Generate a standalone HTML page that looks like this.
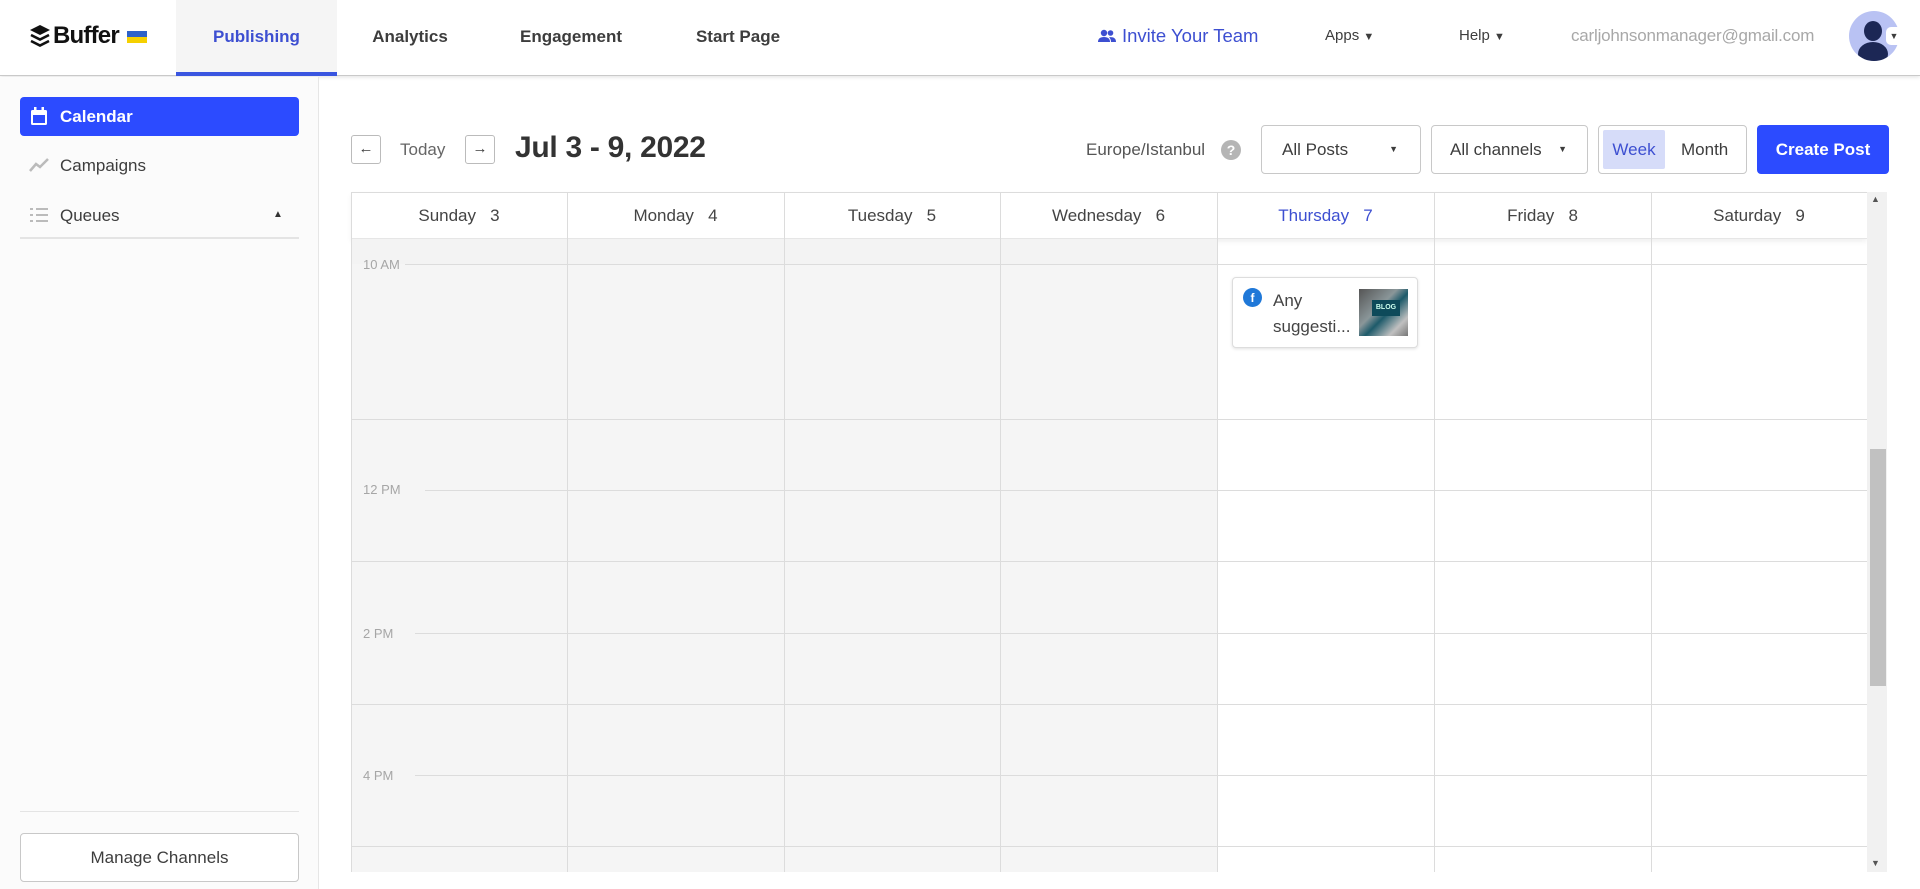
<!DOCTYPE html>
<html><head><meta charset="utf-8"><style>
*{box-sizing:border-box;margin:0;padding:0}
body{width:1920px;height:889px;overflow:hidden;background:#fff;font-family:"Liberation Sans",sans-serif;position:relative;color:#3d3d3d}
.a{position:absolute}
.hdr{left:0;top:0;width:1920px;height:76px;background:#fff;border-bottom:1px solid #c9c9c9;box-shadow:0 1px 4px rgba(0,0,0,.12)}
.tab{top:0;height:76px;line-height:74px;font-size:17px;font-weight:bold;color:#3d3d3d;text-align:center}
.side{left:0;top:77px;width:319px;height:812px;background:#fbfbfb;border-right:1px solid #e6e6e6}
.tb{top:125px;height:49px;border:1px solid #c8c8c8;border-radius:4px;background:#fff;font-size:17px;line-height:47px;color:#3d3d3d}
.vl{top:192px;width:1px;height:680px;background:#dcdcdc}
.hl{left:351px;width:1516px;height:1px;background:#dcdcdc}
.hd{top:192px;height:47px;line-height:47px;text-align:center;font-size:17px;color:#444}
.tl{left:363px;font-size:13px;color:#a6a6a6}
</style></head><body>
<div class="a hdr"></div>
<svg class="a" style="left:29px;top:24px" width="22" height="24" viewBox="0 0 22 24"><path d="M11 1 L21 6 L11 11 L1 6Z" fill="#111"/><path d="M2 11 L11 15.5 L20 11" stroke="#111" stroke-width="2.6" fill="none"/><path d="M2 17 L11 21.5 L20 17" stroke="#111" stroke-width="2.6" fill="none"/></svg>
<div class="a" style="left:53px;top:22px;font-size:24px;font-weight:bold;color:#111;letter-spacing:-0.8px">Buffer</div>
<div class="a" style="left:127px;top:31px;width:20px;height:6px;background:#2e62c9"></div>
<div class="a" style="left:127px;top:37px;width:20px;height:6px;background:#f5d000"></div>
<div class="a tab" style="left:176px;width:161px;background:#f5f5f5;color:#3d4fd1;border-bottom:4px solid #3a56e0;height:76px">Publishing</div>
<div class="a tab" style="left:360px;width:100px">Analytics</div>
<div class="a tab" style="left:510px;width:122px">Engagement</div>
<div class="a tab" style="left:685px;width:106px">Start Page</div>
<svg class="a" style="left:1098px;top:29px" width="18" height="14" viewBox="0 0 18 14"><circle cx="6" cy="4" r="3.2" fill="#3d4fd1"/><circle cx="12.5" cy="4" r="2.8" fill="#3d4fd1"/><path d="M0 13 Q0 8 6 8 Q12 8 12 13Z" fill="#3d4fd1"/><path d="M11 8.2 Q18 7.5 18 13 H13 Q13 10 11 8.2Z" fill="#3d4fd1"/></svg>
<div class="a" style="left:1122px;top:25px;font-size:18.5px;color:#3d4fd1">Invite Your Team</div>
<div class="a" style="left:1325px;top:27px;font-size:15px;color:#3d3d3d">Apps <span style="font-size:11px">▼</span></div>
<div class="a" style="left:1459px;top:27px;font-size:15px;color:#3d3d3d">Help <span style="font-size:11px">▼</span></div>
<div class="a" style="left:1571px;top:26px;font-size:17px;color:#a8a8a8;letter-spacing:-0.2px">carljohnsonmanager@gmail.com</div>
<div class="a" style="left:1849px;top:11px;width:50px;height:50px;border-radius:50%;background:#b9c2f3;overflow:hidden">
<div class="a" style="left:15px;top:10px;width:18px;height:20px;border-radius:50%;background:#1c2755"></div>
<div class="a" style="left:9px;top:31px;width:30px;height:24px;border-radius:50%;background:#1c2755"></div></div>
<div class="a" style="left:1886px;top:27px;width:16px;height:18px;border-radius:5px;background:#fff;font-size:9px;text-align:center;line-height:18px">▼</div>
<div class="a side"></div>
<div class="a" style="left:20px;top:97px;width:279px;height:39px;background:#2c4bff;border-radius:4px"></div>
<svg class="a" style="left:30px;top:107px" width="18" height="19" viewBox="0 0 18 19"><rect x="1" y="3" width="16" height="15" rx="1.5" fill="#fff"/><rect x="4" y="0" width="2.5" height="4" fill="#fff"/><rect x="11.5" y="0" width="2.5" height="4" fill="#fff"/><rect x="3" y="8" width="12" height="8" fill="#2c4bff"/></svg>
<div class="a" style="left:60px;top:107px;font-size:17px;font-weight:bold;color:#fff">Calendar</div>
<svg class="a" style="left:29px;top:158px" width="20" height="14" viewBox="0 0 20 14"><path d="M1 13 L7 6 L11 9 L19 1" stroke="#bbb" stroke-width="2.5" fill="none"/></svg>
<div class="a" style="left:60px;top:156px;font-size:17px;color:#3d3d3d">Campaigns</div>
<svg class="a" style="left:30px;top:207px" width="18" height="16" viewBox="0 0 18 16"><g fill="#bbb"><rect x="0" y="1" width="3" height="2"/><rect x="0" y="7" width="3" height="2"/><rect x="0" y="13" width="3" height="2"/><rect x="6" y="1" width="12" height="2"/><rect x="6" y="7" width="12" height="2"/><rect x="6" y="13" width="12" height="2"/></g></svg>
<div class="a" style="left:60px;top:206px;font-size:17px;color:#3d3d3d">Queues</div>
<div class="a" style="left:273px;top:209px;font-size:10px;color:#333">▲</div>
<div class="a" style="left:20px;top:237px;width:279px;height:2px;background:#e4e4e4"></div>
<div class="a" style="left:20px;top:811px;width:279px;height:1px;background:#e4e4e4"></div>
<div class="a" style="left:20px;top:833px;width:279px;height:49px;border:1px solid #c8c8c8;border-radius:4px;background:#fff;text-align:center;line-height:47px;font-size:17px;color:#3d3d3d">Manage Channels</div>
<div class="a" style="left:351px;top:135px;width:30px;height:29px;border:1px solid #bbb;border-radius:3px;text-align:center;line-height:26px;font-size:15px;font-weight:bold">←</div>
<div class="a" style="left:400px;top:140px;font-size:17px;color:#666">Today</div>
<div class="a" style="left:465px;top:135px;width:30px;height:29px;border:1px solid #bbb;border-radius:3px;text-align:center;line-height:26px;font-size:15px;font-weight:bold">→</div>
<div class="a" style="left:515px;top:131px;font-size:30px;font-weight:bold;color:#333;letter-spacing:-0.3px">Jul 3 - 9, 2022</div>
<div class="a" style="left:1086px;top:140px;font-size:17px;color:#555">Europe/Istanbul</div>
<div class="a" style="left:1221px;top:140px;width:20px;height:20px;border-radius:50%;background:#b5b5b5;color:#fff;font-size:14px;font-weight:bold;text-align:center;line-height:20px">?</div>
<div class="a tb" style="left:1261px;width:160px;padding-left:20px">All Posts<span style="position:absolute;right:22px;font-size:9px">▼</span></div>
<div class="a tb" style="left:1431px;width:157px;padding-left:18px">All channels<span style="position:absolute;right:20px;font-size:9px">▼</span></div>
<div class="a tb" style="left:1598px;width:149px"></div>
<div class="a" style="left:1603px;top:130px;width:62px;height:39px;background:#d6dcf9;border-radius:2px;text-align:center;line-height:39px;font-size:17px;color:#3d4fd1">Week</div>
<div class="a" style="left:1681px;top:130px;line-height:39px;font-size:17px;color:#3d3d3d">Month</div>
<div class="a" style="left:1757px;top:125px;width:132px;height:49px;background:#2c4bff;border-radius:4px;color:#fff;font-size:17px;font-weight:bold;text-align:center;line-height:49px">Create Post</div>
<div class="a" style="left:351px;top:192px;width:866px;height:680px;background:#f5f5f5"></div>
<div class="a" style="left:351px;top:192px;width:1516px;height:47px;background:#fff;border-top:1px solid #dcdcdc;border-bottom:1px solid #e6e6e6;box-shadow:0 3px 5px rgba(0,0,0,.06)"></div>
<div class="a" style="left:351px;top:239px;width:866px;height:25px;background:#f3f3f3"></div>
<div class="a vl" style="left:351px"></div><div class="a vl" style="left:567px"></div><div class="a vl" style="left:784px"></div><div class="a vl" style="left:1000px"></div><div class="a vl" style="left:1217px"></div><div class="a vl" style="left:1434px"></div><div class="a vl" style="left:1651px"></div><div class="a vl" style="left:1867px"></div>
<div class="a hd" style="left:351px;width:216px">Sunday&nbsp;&nbsp; 3</div>
<div class="a hd" style="left:567px;width:217px">Monday&nbsp;&nbsp; 4</div>
<div class="a hd" style="left:784px;width:216px">Tuesday&nbsp;&nbsp; 5</div>
<div class="a hd" style="left:1000px;width:217px">Wednesday&nbsp;&nbsp; 6</div>
<div class="a hd" style="left:1217px;width:217px;color:#3d4fd1">Thursday&nbsp;&nbsp; 7</div>
<div class="a hd" style="left:1434px;width:217px">Friday&nbsp;&nbsp; 8</div>
<div class="a hd" style="left:1651px;width:216px">Saturday&nbsp;&nbsp; 9</div>
<div class="a hl" style="top:264px;left:405px;width:1462px"></div>
<div class="a hl" style="top:419px"></div>
<div class="a hl" style="top:490px;left:425px;width:1442px"></div>
<div class="a hl" style="top:561px"></div>
<div class="a hl" style="top:633px;left:415px;width:1452px"></div>
<div class="a hl" style="top:704px"></div>
<div class="a hl" style="top:775px;left:415px;width:1452px"></div>
<div class="a hl" style="top:846px"></div>
<div class="a tl" style="top:257px">10 AM</div>
<div class="a tl" style="top:482px">12 PM</div>
<div class="a tl" style="top:626px">2 PM</div>
<div class="a tl" style="top:768px">4 PM</div>
<div class="a" style="left:1232px;top:277px;width:186px;height:71px;background:#fff;border:1px solid #ddd;border-radius:4px;box-shadow:0 1px 3px rgba(0,0,0,.12)"></div>
<div class="a" style="left:1243px;top:288px;width:19px;height:19px;border-radius:50%;background:#1f78d8;color:#fff;font-size:12px;font-weight:bold;text-align:center;line-height:20px">f</div>
<div class="a" style="left:1273px;top:288px;font-size:17px;line-height:26px;color:#444">Any<br>suggesti...</div>
<div class="a" style="left:1359px;top:289px;width:49px;height:47px;background:linear-gradient(135deg,#555 0%,#8a9699 40%,#1d5a6a 55%,#c0c0c0 80%,#777 100%)"></div>
<div class="a" style="left:1372px;top:300px;width:28px;height:16px;background:#0e4a5a;color:#cfe;font-size:7px;font-weight:bold;text-align:center;line-height:16px">BLOG</div>
<div class="a" style="left:1867px;top:192px;width:20px;height:680px;background:#f1f1f1"></div>
<div class="a" style="left:1870px;top:449px;width:16px;height:237px;background:#c1c1c1"></div>
<div class="a" style="left:1871px;top:194px;font-size:9px;color:#555">▲</div>
<div class="a" style="left:1871px;top:858px;font-size:9px;color:#555">▼</div>
</body></html>
